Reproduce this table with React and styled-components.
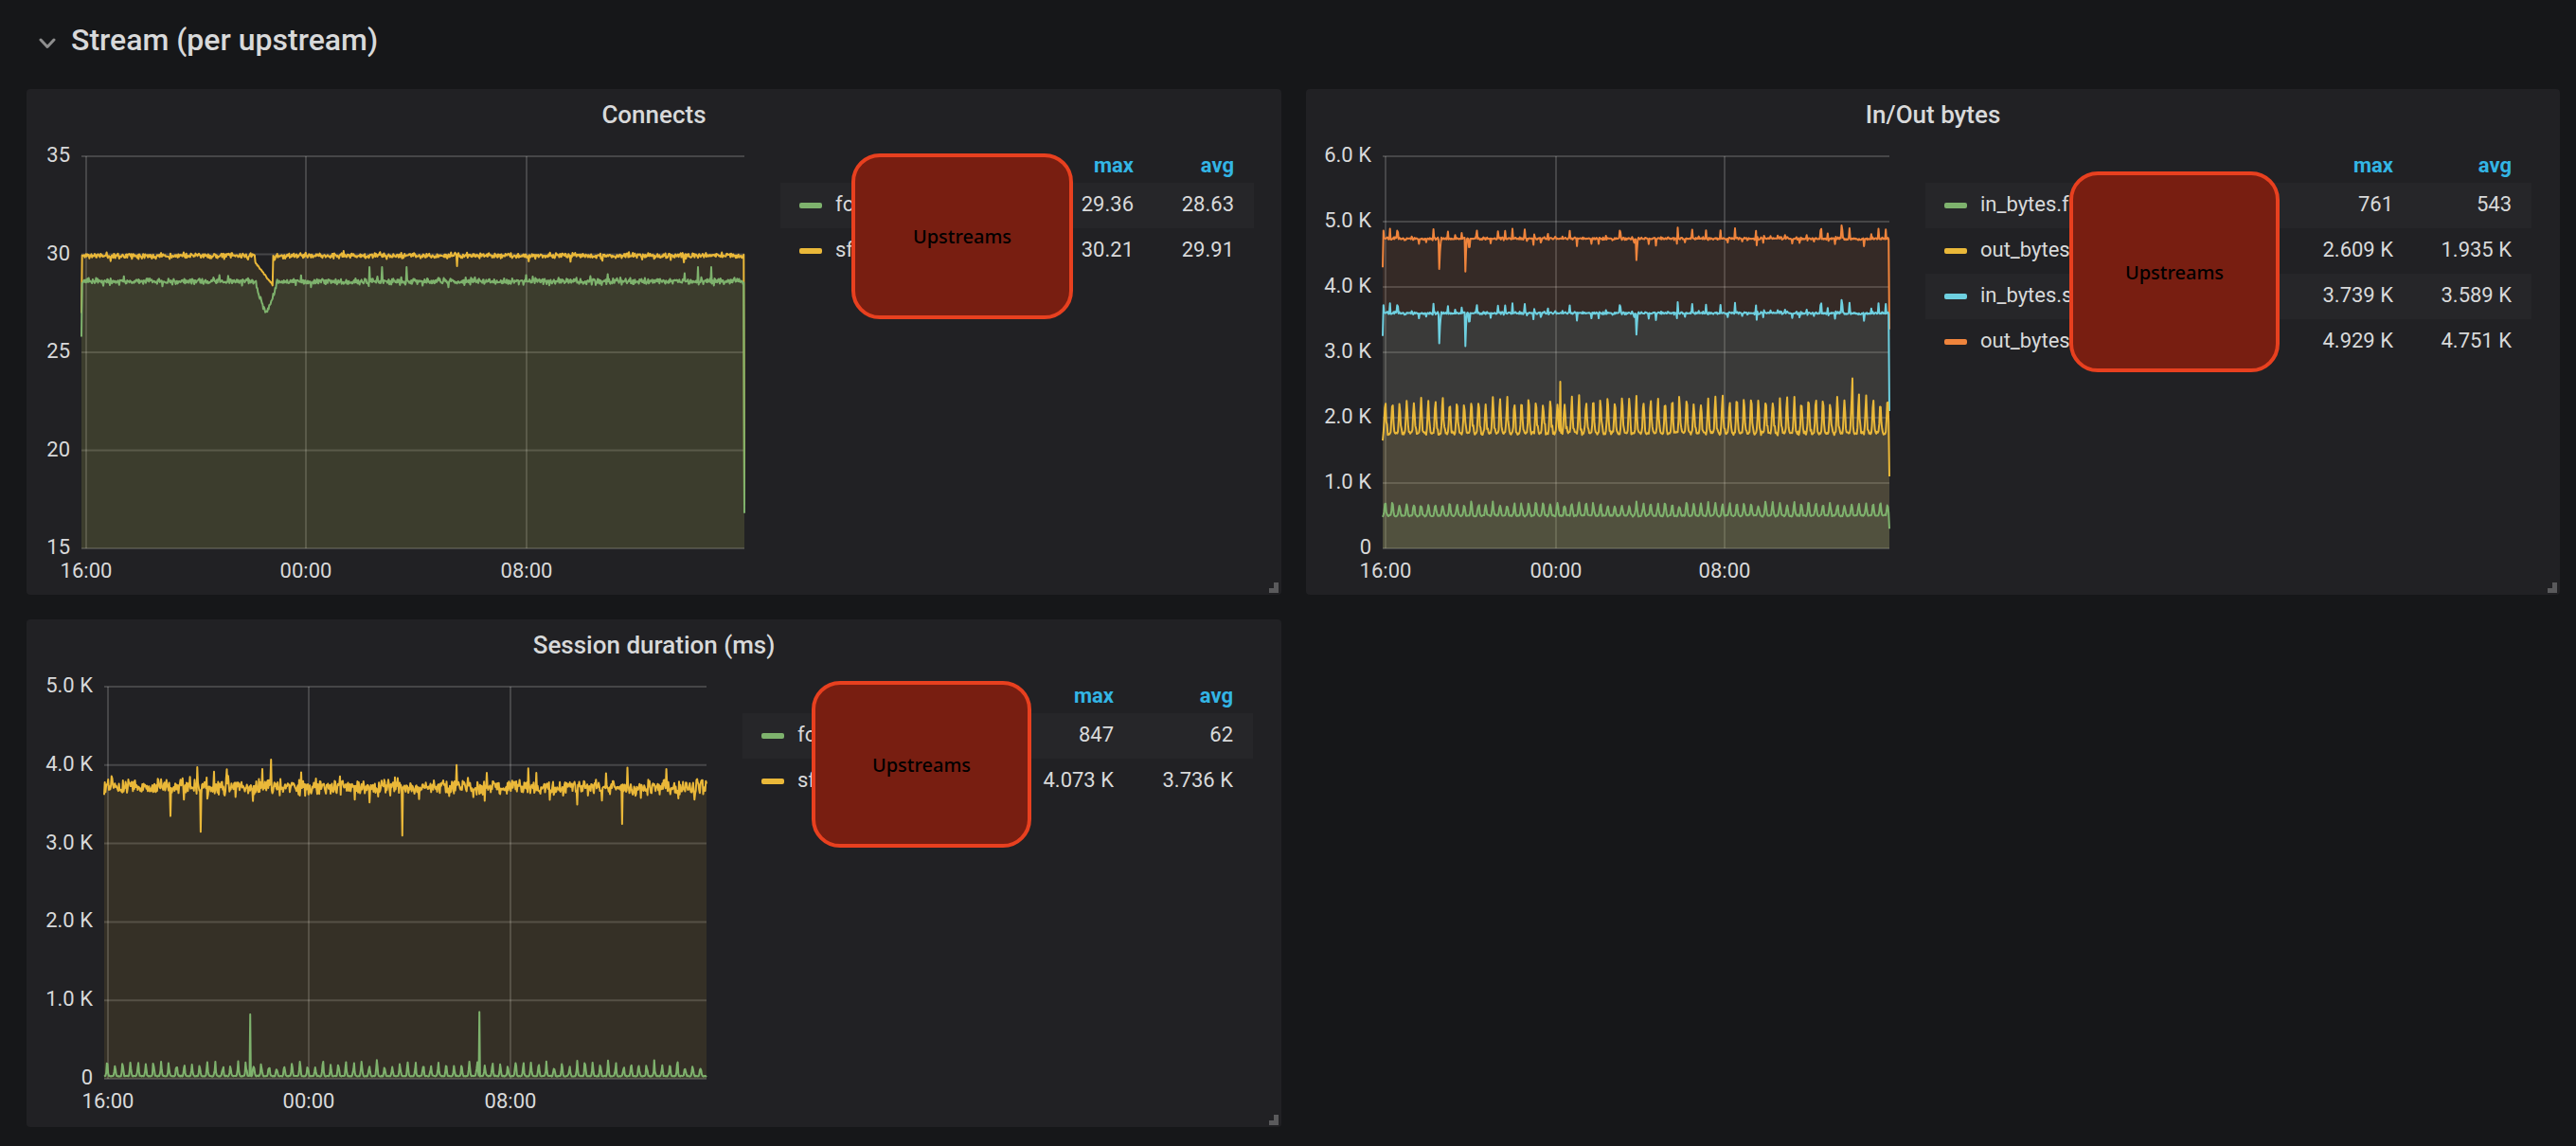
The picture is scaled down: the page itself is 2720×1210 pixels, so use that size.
import React from 'react';
import styled, { createGlobalStyle } from 'styled-components';

const GlobalStyle = createGlobalStyle`
  html, body {
    margin: 0;
    padding: 0;
    background: #161719;
  }
  body {
    font-family: Roboto, "Liberation Sans", sans-serif;
    color: #d8d9da;
  }
`;

const Page = styled.div`
  width: 2720px;
  height: 1210px;
  overflow: hidden;
  box-sizing: border-box;
  padding-left: 28px;
  background: #161719;
`;

const RowHeader = styled.div`
  display: flex;
  align-items: center;
  gap: 16px;
  height: 84px;
  margin-bottom: 10px;
  padding-left: 13px;
`;

const Chevron = styled.svg`
  flex: none;
  margin-top: 8px;
`;

const RowTitle = styled.div`
  font-size: 32px;
  font-weight: 500;
  color: #d8d9da;
`;

const PanelGrid = styled.div`
  display: grid;
  grid-template-columns: 1325px 1324px;
  column-gap: 26px;
  row-gap: 26px;
  align-items: start;
`;

const Panel = styled.div`
  position: relative;
  height: ${p => p.$h}px;
  background: #212124;
  border-radius: 4px;
  display: flex;
  flex-direction: column;
`;

const PanelTitle = styled.div`
  height: 56px;
  line-height: 54px;
  text-align: center;
  font-size: 26px;
  font-weight: 500;
  color: #d8d9da;
`;

const PanelBody = styled.div`
  display: flex;
  align-items: flex-start;
  gap: 38px;
  padding-left: ${p => p.$pad}px;
`;

const ChartSvg = styled.svg`
  flex: none;
  display: block;
  overflow: visible;
  font-family: Roboto, "Liberation Sans", sans-serif;
  font-size: 22px;
  & text {
    fill: #d8d9da;
  }
  & .grid {
    stroke: rgba(255, 255, 255, 0.17);
    stroke-width: 2;
  }
`;

const Legend = styled.div`
  flex: none;
  width: ${p => p.$w}px;
  font-size: 22px;
  color: #d8d9da;
`;

const LegendHead = styled.div`
  display: flex;
  height: 43px;
  box-sizing: border-box;
  padding: 14px 21px 0 0;
  line-height: 22px;
`;

const HeadSpacer = styled.div`
  flex: 1;
`;

const HeadCell = styled.div`
  width: ${p => p.$w}px;
  text-align: right;
  color: #33b5e5;
  font-weight: 700;
`;

const LegendRow = styled.div`
  display: flex;
  align-items: center;
  height: 48px;
  box-sizing: border-box;
  padding: 0 21px 4px 20px;
  background: ${p => (p.$shade ? '#262629' : 'transparent')};
`;

const Swatch = styled.span`
  flex: none;
  width: 24px;
  height: 6px;
  border-radius: 2px;
  margin: 4px 14px 0 0;
  background: ${p => p.$c};
`;

const SeriesName = styled.div`
  flex: 1;
  min-width: 0;
  white-space: nowrap;
`;

const Value = styled.div`
  flex: none;
  width: ${p => p.$w}px;
  text-align: right;
`;

const Redact = styled.div`
  position: absolute;
  left: ${p => p.$x}px;
  top: ${p => p.$y}px;
  z-index: 2;
  width: ${p => p.$w}px;
  height: ${p => p.$h}px;
  box-sizing: border-box;
  border: 4px solid #e8401f;
  border-radius: 30px;
  background: #781e11;
  display: flex;
  align-items: center;
  justify-content: center;
  color: #000;
  font-family: "Noto Sans", "DejaVu Sans", sans-serif;
  font-size: 20px;
  font-weight: 500;
`;

const ResizeHandle = styled.span`
  position: absolute;
  right: 3px;
  bottom: 2px;
  width: 5px;
  height: 6px;
  border-right: 5px solid #5a5a5c;
  border-bottom: 5px solid #5a5a5c;
`;

// palette
const GREEN = '#7eb26d';
const YELLOW = '#eab839';
const BLUE = '#6ed0e0';
const ORANGE = '#ef843c';

// deterministic noise
const mulberry = seed => () => {
  seed |= 0;
  seed = (seed + 0x6d2b79f5) | 0;
  let t = Math.imul(seed ^ (seed >>> 15), 1 | seed);
  t = (t + Math.imul(t ^ (t >>> 7), 61 | t)) ^ t;
  return ((t ^ (t >>> 14)) >>> 0) / 4294967296;
};
const gauss = r => (r() + r() + r() - 1.5) / 1.5;
const bump = (f, c, w) => Math.max(0, 1 - Math.abs(f - c) / w);
const pulse = (i, period, at = 0.35, w = 0.1) => {
  const ph = (i % period) / period;
  return Math.exp(-Math.pow((ph - at) / w, 2));
};

const makeSeries = (n, seed, fn) => {
  const r = mulberry(seed);
  return Array.from({ length: n }, (_, i) => fn(i / (n - 1), i, r, n));
};
const at = (n, f) => Math.round(f * (n - 1));

// Connects
const N1 = 1000;
const connYellow = makeSeries(N1, 11, (f, i, r, n) => {
  if (i === 0) return 27;
  if (i === n - 1) return 17.2;
  let v = 29.93 + gauss(r) * 0.2;
  if (r() < 0.04) v += (r() - 0.6) * 0.6;
  if (f > 0.262 && f < 0.289) v = 29.6 - ((f - 0.262) / 0.027) * 1.2 + gauss(r) * 0.06;
  if (i === at(n, 0.567)) v = 29.4;
  return v;
});
const connGreenSpikes = [0.434, 0.453, 0.49, 0.93, 0.95].map(c => at(N1, c));
const connGreen = makeSeries(N1, 23, (f, i, r, n) => {
  if (i === 0) return 25.8;
  if (i === n - 1) return 16.8;
  let v = 28.62 + gauss(r) * 0.22;
  if (r() < 0.04) v += (r() - 0.5) * 0.6;
  v -= 1.6 * Math.pow(bump(f, 0.279, 0.016), 0.7);
  if (connGreenSpikes.includes(i)) v = 29.35;
  return v;
});

// In/Out bytes
const N2 = 700;
const P2 = 9.9;
const byteDips = [
  [at(N2, 0.112), 0.45],
  [at(N2, 0.163), 0.5],
  [at(N2, 0.5), 0.35],
];
const orangeBase = makeSeries(N2, 31, (f, i, r) => {
  let v = 4.74 + gauss(r) * 0.03;
  if ((i % P2) / P2 < 0.14) v += (r() - 0.45) * 0.28;
  if (i === at(N2, 0.28)) v += 0.15;
  if (i === at(N2, 0.905)) v += 0.2;
  byteDips.forEach(([k, d]) => {
    if (i === k) v -= d;
    if (i === k + 1) v -= d * 0.4;
  });
  return v;
});
const outSf = orangeBase.map((v, i, a) => (i === 0 ? 4.3 : i === a.length - 1 ? 3.35 : v));
const inSf = orangeBase.map((v, i, a) => (i === 0 ? 3.25 : i === a.length - 1 ? 2.1 : v - 1.14));
const outFoo = makeSeries(N2, 47, (f, i, r, n) => {
  if (i === 0) return 1.65;
  if (i === n - 1) return 1.1;
  let v = 1.76 + 0.52 * pulse(i, P2, 0.35, 0.14) * (0.85 + 0.3 * r()) + gauss(r) * 0.04;
  v += 0.12 * pulse(i, P2, 0.62, 0.08) * r();
  if (i === at(n, 0.35)) v = 2.55;
  if (i === at(n, 0.927)) v = 2.6;
  return v;
});
const inFoo = makeSeries(N2, 53, (f, i, r, n) => {
  if (i === 0) return 0.48;
  if (i === n - 1) return 0.3;
  return 0.5 + 0.18 * pulse(i, P2, 0.35, 0.15) * (0.8 + 0.4 * r()) + gauss(r) * 0.02;
});

// Session duration
const N3 = 900;
const sessDips = [
  [at(N3, 0.11), 3.35],
  [at(N3, 0.16), 3.15],
  [at(N3, 0.495), 3.1],
  [at(N3, 0.86), 3.25],
  [at(N3, 0.277), 4.07],
  [at(N3, 0.262), 3.95],
  [at(N3, 0.585), 4.0],
];
const sessSf = makeSeries(N3, 61, (f, i, r) => {
  if (i === 0) return 3.62;
  let v = 3.72 + gauss(r) * 0.14;
  if (r() < 0.08) v += (r() - 0.5) * 0.45;
  sessDips.forEach(([k, d]) => {
    if (i === k) v = d;
  });
  return v;
});
const sessFoo = makeSeries(N3, 71, (f, i, r, n) => {
  if (i === at(n, 0.242)) return 0.82;
  if (i === at(n, 0.623)) return 0.85;
  return 0.03 + 0.17 * pulse(i, 11.5, 0.4, 0.12) * (0.5 + 0.7 * r()) + Math.abs(gauss(r)) * 0.015;
});

const PLOT_TOP = 15;
const PLOT_H = 414;

const Chart = ({ yLabelW, plotW, min, max, ticks, gridX, series }) => {
  const x0 = yLabelW + 12;
  const bottom = PLOT_TOP + PLOT_H;
  const yOf = v => PLOT_TOP + ((max - v) / (max - min)) * PLOT_H;
  const labels = ['16:00', '00:00', '08:00'];

  const paths = series.map(s => {
    const step = plotW / (s.data.length - 1);
    const pts = s.data.map((v, i) => `${(x0 + i * step).toFixed(1)},${yOf(v).toFixed(1)}`);
    const line = `M${pts.join('L')}`;
    const area = `${line}L${x0 + plotW},${bottom}L${x0},${bottom}Z`;
    return { ...s, line, area };
  });

  return (
    <ChartSvg width={x0 + plotW} height={470}>
      {ticks.map(t => (
        <g key={t.label}>
          <line className="grid" x1={x0} x2={x0 + plotW} y1={yOf(t.v)} y2={yOf(t.v)} />
          <text x={yLabelW} y={yOf(t.v) + 6} textAnchor="end">
            {t.label}
          </text>
        </g>
      ))}
      {gridX.map((gx, i) => (
        <g key={labels[i]}>
          <line className="grid" x1={x0 + gx} x2={x0 + gx} y1={PLOT_TOP} y2={bottom} />
          <text x={x0 + gx} y={bottom + 31} textAnchor="middle">
            {labels[i]}
          </text>
        </g>
      ))}
      {paths.map(p => (
        <path key={`a-${p.name}`} d={p.area} fill={p.color} fillOpacity={0.1} />
      ))}
      {paths.map(p => (
        <path
          key={`l-${p.name}`}
          d={p.line}
          fill="none"
          stroke={p.color}
          strokeWidth={2}
          strokeLinejoin="round"
        />
      ))}
    </ChartSvg>
  );
};

const LegendTable = ({ width, colW, rows }) => (
  <Legend $w={width}>
    <LegendHead>
      <HeadSpacer />
      <HeadCell $w={colW}>max</HeadCell>
      <HeadCell $w={colW}>avg</HeadCell>
    </LegendHead>
    {rows.map((row, i) => (
      <LegendRow key={row.name} $shade={i % 2 === 0}>
        <Swatch $c={row.color} />
        <SeriesName>{row.name}</SeriesName>
        <Value $w={colW}>{row.max}</Value>
        <Value $w={colW}>{row.avg}</Value>
      </LegendRow>
    ))}
  </Legend>
);

const kTicks = n =>
  Array.from({ length: n + 1 }, (_, i) => ({ v: i, label: i === 0 ? '0' : `${i}.0 K` }));

const panels = [
  {
    title: 'Connects',
    h: 534,
    pad: 18,
    chart: {
      yLabelW: 28,
      plotW: 700,
      min: 15,
      max: 35,
      ticks: [35, 30, 25, 20, 15].map(v => ({ v, label: String(v) })),
      gridX: [5, 237, 470],
      series: [
        { name: 'sf', color: YELLOW, data: connYellow },
        { name: 'foo', color: GREEN, data: connGreen },
      ],
    },
    legend: {
      width: 500,
      colW: 106,
      rows: [
        { name: 'foo', color: GREEN, max: '29.36', avg: '28.63' },
        { name: 'sf', color: YELLOW, max: '30.21', avg: '29.91' },
      ],
    },
    box: { x: 871, y: 68, w: 234, h: 175 },
  },
  {
    title: 'In/Out bytes',
    h: 534,
    pad: 17,
    chart: {
      yLabelW: 52,
      plotW: 535,
      min: 0,
      max: 6,
      ticks: kTicks(6),
      gridX: [3, 183, 361],
      series: [
        { name: 'out_sf', color: ORANGE, data: outSf },
        { name: 'in_sf', color: BLUE, data: inSf },
        { name: 'out_foo', color: YELLOW, data: outFoo },
        { name: 'in_foo', color: GREEN, data: inFoo },
      ],
    },
    legend: {
      width: 640,
      colW: 125,
      rows: [
        { name: 'in_bytes.foo', color: GREEN, max: '761', avg: '543' },
        { name: 'out_bytes.foo', color: YELLOW, max: '2.609 K', avg: '1.935 K' },
        { name: 'in_bytes.sf', color: BLUE, max: '3.739 K', avg: '3.589 K' },
        { name: 'out_bytes.sf', color: ORANGE, max: '4.929 K', avg: '4.751 K' },
      ],
    },
    box: { x: 806, y: 87, w: 222, h: 212 },
  },
  {
    title: 'Session duration (ms)',
    h: 536,
    pad: 17,
    chart: {
      yLabelW: 53,
      plotW: 636,
      min: 0,
      max: 5,
      ticks: kTicks(5),
      gridX: [4, 216, 429],
      series: [
        { name: 'sf', color: YELLOW, data: sessSf },
        { name: 'foo', color: GREEN, data: sessFoo },
      ],
    },
    legend: {
      width: 539,
      colW: 126,
      rows: [
        { name: 'foo', color: GREEN, max: '847', avg: '62' },
        { name: 'sf', color: YELLOW, max: '4.073 K', avg: '3.736 K' },
      ],
    },
    box: { x: 829, y: 65, w: 232, h: 176 },
  },
];

const App = () => (
  <>
    <GlobalStyle />
    <Page>
      <RowHeader>
        <Chevron width="18" height="12" viewBox="0 0 18 12">
          <polyline
            points="2,2 9,9.5 16,2"
            fill="none"
            stroke="#8e8e8e"
            strokeWidth="3"
            strokeLinecap="round"
            strokeLinejoin="round"
          />
        </Chevron>
        <RowTitle>Stream (per upstream)</RowTitle>
      </RowHeader>
      <PanelGrid>
        {panels.map(p => (
          <Panel key={p.title} $h={p.h}>
            <PanelTitle>{p.title}</PanelTitle>
            <PanelBody $pad={p.pad}>
              <Chart {...p.chart} />
              <LegendTable {...p.legend} />
            </PanelBody>
            <Redact $x={p.box.x} $y={p.box.y} $w={p.box.w} $h={p.box.h}>
              Upstreams
            </Redact>
            <ResizeHandle />
          </Panel>
        ))}
      </PanelGrid>
    </Page>
  </>
);

export default App;
